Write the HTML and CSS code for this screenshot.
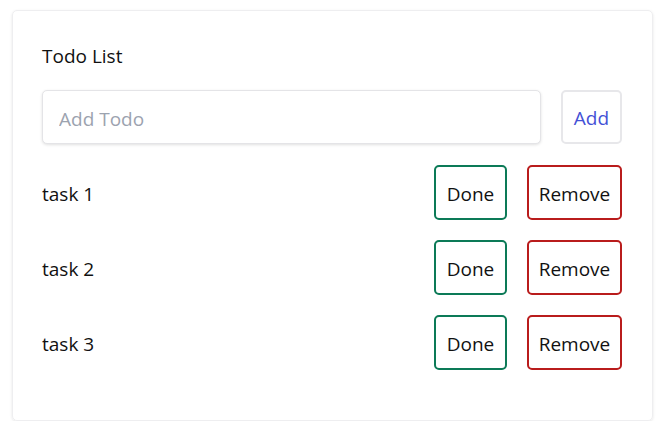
FILE: index.html
```html
<!DOCTYPE html>
<html>
<head>
<meta charset="utf-8">
<link rel="stylesheet" href="styles.css">
</head>
<body>
<div class="card">
  <div class="title">Todo List</div>
  <div class="add-row">
    <input class="todo-input" type="text" placeholder="Add Todo">
    <button class="btn btn-add">Add</button>
  </div>
  <ul class="list">
    <li class="item"><span class="label">task 1</span><button class="btn btn-done">Done</button><button class="btn btn-remove">Remove</button></li>
    <li class="item"><span class="label">task 2</span><button class="btn btn-done">Done</button><button class="btn btn-remove">Remove</button></li>
    <li class="item"><span class="label">task 3</span><button class="btn btn-done">Done</button><button class="btn btn-remove">Remove</button></li>
  </ul>
</div>
</body>
</html>
```
FILE: styles.css
```css
* { box-sizing: border-box; }
body {
  margin: 0;
  padding: 10px 13px 0 12px;
  background: #fff;
  font-family: "Open Sans", "Noto Sans", sans-serif;
  color: #111;
}
.card {
  width: 641px;
  height: 411px;
  border: 1px solid #eeeef0;
  border-radius: 5px;
  box-shadow: 0 1px 3px rgba(0,0,0,0.1);
  padding: 29px 30px 30px 29px;
}
.title {
  font-size: 19px;
  line-height: 32px;
  margin-bottom: 18px;
}
.add-row {
  display: flex;
  gap: 20px;
  margin-bottom: 21px;
}
.todo-input {
  flex: 1;
  height: 54px;
  border: 1px solid #e4e4e7;
  border-radius: 5px;
  box-shadow: 0 1px 3px rgba(0,0,0,0.12);
  padding: 3px 16px 0;
  font-family: inherit;
  font-size: 19px;
  color: #111;
  outline: none;
}
.todo-input::placeholder { color: #9ca3af; }
.btn {
  font-family: inherit;
  font-size: 19px;
  background: #fff;
  border-radius: 5px;
  height: 54px;
  padding: 2px 8px 0;
  cursor: pointer;
  color: #111;
}
.btn-add {
  width: 61px;
  border: 2px solid #e7e7ea;
  color: #4451d6;
}
.list {
  list-style: none;
  margin: 0;
  padding: 0;
  display: flex;
  flex-direction: column;
  gap: 20px;
}
.item {
  display: flex;
  align-items: center;
  gap: 20px;
  height: 55px;
}
.label {
  flex: 1;
  font-size: 19px;
  padding-top: 2px;
}
.btn-done {
  height: 55px;
  width: 73px;
  border: 2px solid #0c7a57;
}
.btn-remove {
  height: 55px;
  width: 95px;
  border: 2px solid #b91c1c;
}
```
